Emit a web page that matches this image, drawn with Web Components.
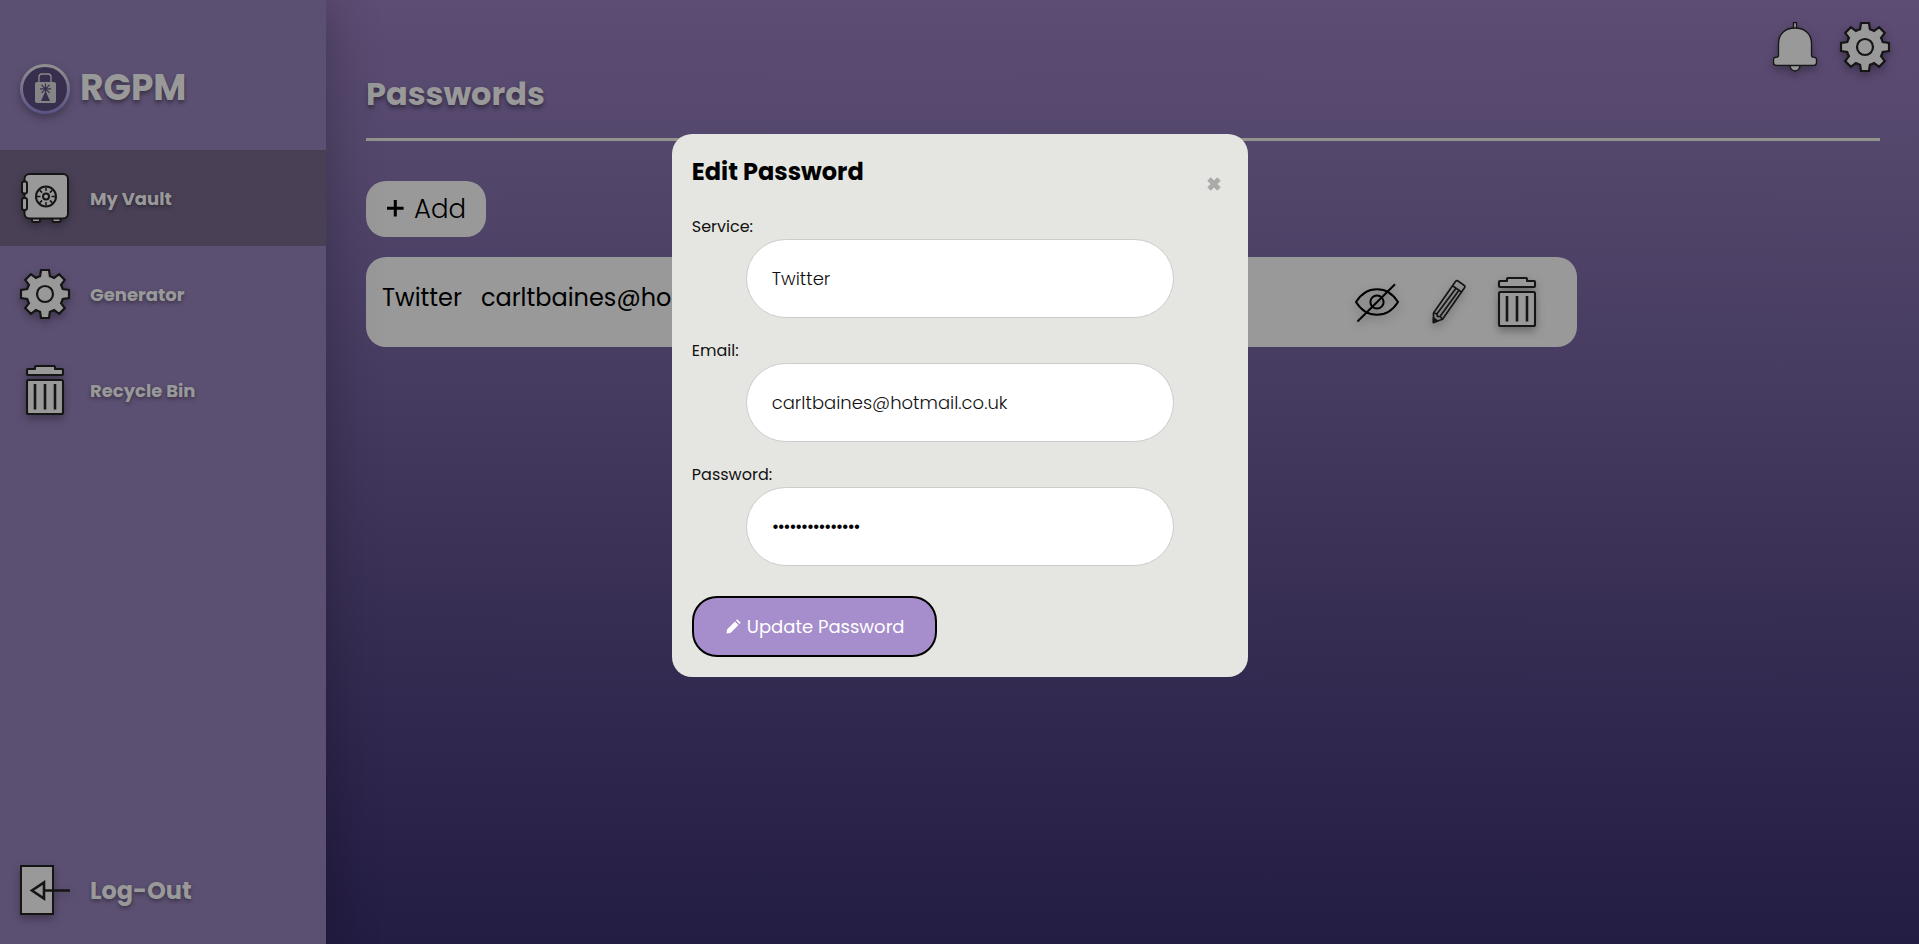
<!DOCTYPE html>
<html lang="en">
<head>
<meta charset="utf-8">
<title>RGPM</title>
<style>
html,body{margin:0;height:100%;overflow:hidden}
body{font-family:Poppins,Inter,"Open Sans",sans-serif}
</style>
</head>
<body>
<rgpm-app></rgpm-app>
<script>
const define=(name,html,setup)=>customElements.define(name,class extends HTMLElement{
  connectedCallback(){
    if(this.shadowRoot)return;
    const t=document.createElement('template');
    t.innerHTML=html;
    this.attachShadow({mode:'open'}).append(t.content.cloneNode(true));
    if(setup)setup(this,this.shadowRoot);
  }
});

/* A single line of text; with "w" it is tracked to fill that width. */
define('text-line',`<style>
:host{display:inline-block;white-space:nowrap;line-height:1}
span{display:inline-block}
</style><span><slot></slot></span>`,(el,root)=>{
  if(!el.hasAttribute('w'))return;
  const span=root.querySelector('span'),w=+el.getAttribute('w');
  const gap=(w-span.getBoundingClientRect().width)/(el.textContent.length-1);
  span.style.letterSpacing=gap.toFixed(3)+'px';
  el.style.width=w+'px';
});

/* Eight-toothed cog outline, centred on 25,25. */
const cog=(()=>{
  const pt=(a,r,o)=>{
    const x=25+r*Math.sin(a)+o*Math.cos(a),y=25-r*Math.cos(a)+o*Math.sin(a);
    return x.toFixed(2)+' '+y.toFixed(2);
  };
  let d='';
  for(let i=0;i<8;i++){
    const a=i*Math.PI/4;
    d+=(i?'A18.500 18.500 0 0 1 ':'M')+pt(a,17.8,-4.9)+'L'+pt(a,24,-4)+'L'+pt(a,24,4)+'L'+pt(a,17.8,4.9);
  }
  return d+'A18.500 18.500 0 0 1 '+pt(0,17.8,-4.9)+'Z';
})();
const icons={
 gear:`<path d="${cog}" fill="#999" stroke="#151515" stroke-width="2.200"/><circle cx="25" cy="25" r="8" fill="#999" stroke="#151515" stroke-width="2.200"/>`,
 bin:`<g fill="#999" stroke="#151515" stroke-width="2.100" stroke-linejoin="round"><path d="M7 5Q7 4 8 4H15V2Q15 1 16 1H34Q35 1 35 2V4H42Q43 4 43 5V9Q43 10 42 10H8Q7 10 7 9Z"/><rect x="7" y="15" width="36" height="34" rx="1.500"/><path d="M15 19V44.500M25 19V44.500M35 19V44.500" stroke-width="2.600"/></g>`,
 vault:`<g fill="#999" stroke="#151515" stroke-width="2"><rect x="12" y="44" width="8" height="5" rx="1.500"/><rect x="32.500" y="44" width="8" height="5" rx="1.500"/><rect x="4.500" y="1" width="43.500" height="44.500" rx="5"/><rect x="2" y="8.500" width="5" height="12" rx="2"/><rect x="2" y="25" width="5" height="12" rx="2"/><circle cx="26" cy="23.500" r="10"/><circle cx="26" cy="23.500" r="3"/><path d="M26 14.500v3.500M26 29V32.500M17 23.500h3.500M31.500 23.500H35M19.600 17.100l2.500 2.500M29.900 27.400l2.500 2.500M32.400 17.100l-2.500 2.500M22.100 27.400l-2.500 2.500" stroke-width="1.500"/></g>`,
 logout:`<rect x="1" y="1" width="32" height="48" fill="#999" stroke="#151515" stroke-width="2"/><path d="M50 25.500H25M24 17.500V33.500L12 25.500Z" fill="#999" stroke="#151515" stroke-width="2.600"/>`,
 bell:`<g fill="#999" stroke="#151515" stroke-width="1.300"><rect x="23.500" y=".6" width="3" height="7"/><path d="M20 43.500a5 5.500 0 0 0 10 0z"/><path d="M8.500 33V21.500C8.500 12 15 6 25 6s16.500 6 16.500 15.500V33c0 1.500.7 2.200 2 2.200 2 0 3 .8 3 2.300v3c0 1.700-1 2.800-2.500 2.800H6c-1.500 0-2.500-1.100-2.500-2.800v-3c0-1.500 1-2.300 3-2.300 1.300 0 2-.7 2-2.200z"/></g>`,
 eye:`<g fill="none" stroke="#000" stroke-width="2"><path d="M4 25C9 17 17 12.200 25 12.200S41 17 46 25C41 33 33 37.800 25 37.800S9 33 4 25Z"/><circle cx="25" cy="25" r="6.600"/><path d="M5.500 44.500L43 7.200"/></g>`,
 pencil:`<g fill="none" stroke="#151515" stroke-width="1.700" stroke-linejoin="round"><path d="M9.500 36L31.500 4.500Q32.500 3 34 4L40 8.200Q41.500 9.300 40.500 10.700L18.500 42.200L9.500 45.500Z"/><path d="M28.500 8.700L37.800 15.200M13 36.800L32 11.200M16 39.500L35 13.200M9.500 36L13 36.800L13.300 39.300L16 39.500L18.500 42.200"/><path d="M9.500 41L13.500 44L9.500 45.500Z" fill="#151515"/></g>`,
 logo:`<defs><linearGradient id="r" x2="0" y2="1"><stop offset="0" stop-color="#8f8f90"/><stop offset=".5" stop-color="#75708b"/><stop offset="1" stop-color="#5c5484"/></linearGradient></defs><circle cx="25" cy="25" r="23.500" fill="#382e4e" stroke="url(#r)" stroke-width="3"/><path d="M19 18V13Q19 10 22 10H28Q31 10 31 13V18" fill="none" stroke="#8a8a8a" stroke-width="1.300"/><rect x="15" y="18" width="21" height="21" rx="2" fill="#858587"/><path d="M25.500 19.500V30M20 24.800H31M21.500 20.800L29.500 28.800M29.500 20.800L21.500 28.800" stroke="#382e4e" stroke-width="1.200"/><path d="M25.500 27L30 37H21Z" fill="#382e4e"/>`
};
define('app-icon',`<style>
:host{display:block;flex:none;width:50px;height:50px;filter:drop-shadow(0 4px 4px rgba(0,0,0,.3))}
svg{display:block;width:50px;height:50px;overflow:visible}
</style><svg viewBox="0 0 50 50"></svg>`,(el,root)=>{
  root.querySelector('svg').innerHTML=icons[el.getAttribute('name')];
});

define('nav-item',`<style>
:host{display:flex;align-items:center;gap:20px;height:96px;padding-left:20px;font-weight:700;font-size:18px;text-shadow:0 2px 4px rgba(0,0,0,.4)}
:host([active]){background:#494056}
:host([large]){font-size:24px}
.label{display:flex;padding-top:1px}
</style><slot name="icon"></slot><div class="label"><slot></slot></div>`);

define('side-bar',`<style>
:host{display:flex;flex-direction:column;width:326px;height:100%;background:#5c5072;color:#999;box-shadow:0 0 50px rgba(0,0,0,.3);position:relative}
.brand{display:flex;gap:10px;height:150px;padding:64px 0 0 20px;box-sizing:border-box;font-weight:700;font-size:36px;text-shadow:0 3px 4px rgba(0,0,0,.4)}
.brand text-line{padding-top:6px}
.out{margin-top:auto;margin-bottom:6px}
</style>
<div class="brand"><app-icon name="logo"></app-icon><text-line>RGPM</text-line></div>
<nav-item active><app-icon slot="icon" name="vault"></app-icon><text-line>My Vault</text-line></nav-item>
<nav-item><app-icon slot="icon" name="gear"></app-icon><text-line>Generator</text-line></nav-item>
<nav-item><app-icon slot="icon" name="bin"></app-icon><text-line>Recycle Bin</text-line></nav-item>
<nav-item class="out" large><app-icon slot="icon" name="logout"></app-icon><text-line>Log-Out</text-line></nav-item>`);

define('vault-row',`<style>
:host{display:flex;width:1211px;height:90px;box-sizing:border-box;background:#999;border-radius:20px;padding:20px 35px 0 16px;color:#000;font-size:24px}
text-line{padding-top:9px}
.mail{margin-left:19px}
.tools{display:flex;margin-left:auto}
.tools app-icon+app-icon{margin-left:20px}
.tools app-icon:nth-child(2){margin-left:22px;margin-right:-2px}
</style><text-line>Twitter</text-line><text-line class="mail">carltbaines@hotmail.co.uk</text-line>
<div class="tools"><app-icon name="eye"></app-icon><app-icon name="pencil"></app-icon><app-icon name="bin"></app-icon></div>`);

define('vault-page',`<style>
:host{display:block;flex:1;padding:22px 29px 0 40px;color:#999}
.bar{display:flex;justify-content:space-between;height:116px;box-sizing:border-box}
h1{margin:0;padding-top:56px;font-size:32px;line-height:1;text-shadow:0 3px 4px rgba(0,0,0,.4)}
.icons{display:flex;gap:20px}
.rule{height:3px;margin:0 10px 40px 0;background:#94948f}
button{display:flex;align-items:center;gap:10px;width:120px;height:56px;box-sizing:border-box;margin:0 0 20px;padding:0 0 0 20px;border:0;border-radius:20px;background:#999;font:300 26px Poppins,Inter,sans-serif;color:#000}
</style>
<div class="bar"><h1><text-line>Passwords</text-line></h1><div class="icons"><app-icon name="bell"></app-icon><app-icon name="gear"></app-icon></div></div>
<div class="rule"></div>
<button><svg width="18" height="18" viewBox="0 0 18 18"><path d="M9.300 0v16.500M1 8.200h16.600" stroke="#000" stroke-width="3"/></svg><text-line>Add</text-line></button>
<vault-row></vault-row>`);

define('form-field',`<style>
:host{display:block;height:124px}
label{display:block;height:20px;font-size:16px;line-height:1;color:#111}
.box{width:428px;height:79px;box-sizing:border-box;margin-left:54.200px;padding:0 24.700px;display:flex;align-items:center;border:1px solid #ccc;border-radius:40px;background:#fff;font-size:18px;font-weight:300;color:#111}
</style><label><slot name="label"></slot></label><div class="box"><slot></slot></div>`);

define('edit-dialog',`<style>
:host{display:block;width:576px;height:543px;box-sizing:border-box;padding:20px 20px 20px 20.300px;border-radius:20px;background:#e5e6e1;color:#000}
header{display:flex;justify-content:space-between;height:65px}
h2{margin:0;font-size:24px;line-height:1;padding-top:6px}
header svg{margin:23px 6.500px 0 0}
.dots{display:block;font-size:18px;font-weight:400;color:#000}
button{display:flex;align-items:center;gap:6px;width:245px;height:61px;box-sizing:border-box;margin-top:5px;padding:0 0 0 32px;border:2px solid #000;border-radius:25px;background:#a58ecb;color:#fff;font:400 18px Poppins,Inter,sans-serif}
</style>
<header><h2><text-line>Edit Password</text-line></h2><svg width="14" height="14" viewBox="0 0 14 14"><path d="M2 2l10 10M12 2L2 12" stroke="#aaa" stroke-width="4.800"/></svg></header>
<form-field><text-line slot="label">Service:</text-line><text-line>Twitter</text-line></form-field>
<form-field><text-line slot="label">Email:</text-line><text-line>carltbaines@hotmail.co.uk</text-line></form-field>
<form-field><text-line slot="label">Password:</text-line><text-line class="dots" w="89">•••••••••••••••</text-line></form-field>
<button><svg width="15" height="15" viewBox="0 0 15 15"><path d="M.5 14.500L1 10.500 9 2.500 12.500 6 4.500 14ZM10 1.500L11.200.3 14.700 3.800 13.500 5Z" fill="#fff"/></svg><text-line>Update Password</text-line></button>`);

define('rgpm-app',`<style>
:host{display:flex;width:100%;height:100vh;background:linear-gradient(#5d4c74,#54476c 16%,#231c43);position:relative}
.overlay{position:absolute;inset:0;display:flex;justify-content:center;align-items:flex-start;padding-top:134px}
</style>
<side-bar></side-bar><vault-page></vault-page>
<div class="overlay"><edit-dialog></edit-dialog></div>`);
</script>
</body>
</html>
